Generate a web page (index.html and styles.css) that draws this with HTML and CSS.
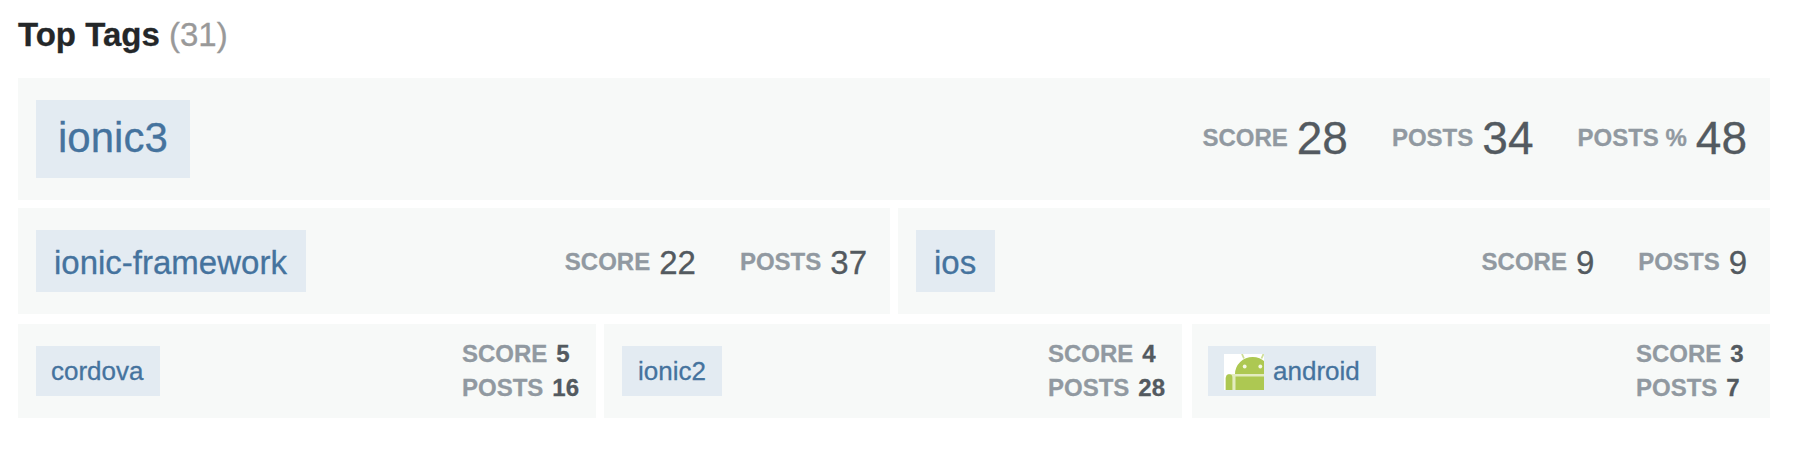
FILE: index.html
```html
<!DOCTYPE html>
<html lang="en">
<head>
<meta charset="utf-8">
<title>Top Tags</title>
<link rel="stylesheet" href="styles.css">
</head>
<body>
<section class="top-tags">
  <h2 class="heading">Top Tags <span class="count">(31)</span></h2>

  <div class="row row-large">
    <div class="card">
      <a class="tag">ionic3</a>
      <div class="stats">
        <div class="stat"><span class="label">SCORE</span><span class="number">28</span></div>
        <div class="stat"><span class="label">POSTS</span><span class="number">34</span></div>
        <div class="stat"><span class="label">POSTS %</span><span class="number">48</span></div>
      </div>
    </div>
  </div>

  <div class="row row-medium">
    <div class="card">
      <a class="tag">ionic-framework</a>
      <div class="stats">
        <div class="stat"><span class="label">SCORE</span><span class="number">22</span></div>
        <div class="stat"><span class="label">POSTS</span><span class="number">37</span></div>
      </div>
    </div>
    <div class="card">
      <a class="tag">ios</a>
      <div class="stats">
        <div class="stat"><span class="label">SCORE</span><span class="number">9</span></div>
        <div class="stat"><span class="label">POSTS</span><span class="number">9</span></div>
      </div>
    </div>
  </div>

  <div class="row row-small">
    <div class="card">
      <a class="tag tag-snug">cordova</a>
      <div class="stats">
        <div class="stat"><span class="label">SCORE</span><span class="number">5</span></div>
        <div class="stat"><span class="label">POSTS</span><span class="number">16</span></div>
      </div>
    </div>
    <div class="card">
      <a class="tag">ionic2</a>
      <div class="stats">
        <div class="stat"><span class="label">SCORE</span><span class="number">4</span></div>
        <div class="stat"><span class="label">POSTS</span><span class="number">28</span></div>
      </div>
    </div>
    <div class="card">
      <a class="tag">
        <svg class="tag-icon" width="40" height="36" viewBox="0 0 40 36">
          <rect width="40" height="36" fill="#fff"/>
          <rect x="1" y="20" width="39" height="16" fill="#e3ecc0"/>
          <path d="M0 19h5L1 24v12H0z" fill="#fff"/>
          <g fill="#adc852">
            <path d="M11 20a17.700 17 0 0 1 35.400 0z"/>
            <path d="M11.500 22.500H40V36H11.500z"/>
            <path d="M2 36V23.500a3.200 3.200 0 0 1 6.400 0V36z"/>
          </g>
          <path d="M18 0l2 4.500M39.500 0l-2 4.500" stroke="#cfdf98" stroke-width="1.800"/>
          <circle cx="20.700" cy="12.500" r="1.900" fill="#f4f8e4"/>
          <circle cx="36.300" cy="12.500" r="1.900" fill="#f4f8e4"/>
        </svg>android</a>
      <div class="stats">
        <div class="stat"><span class="label">SCORE</span><span class="number">3</span></div>
        <div class="stat"><span class="label">POSTS</span><span class="number">7</span></div>
      </div>
    </div>
  </div>
</section>
</body>
</html>
```
FILE: styles.css
```css
body {
  margin: 0;
  background: #fff;
  font-family: "Liberation Sans", Arial, Helvetica, sans-serif;
  -webkit-text-stroke: 0.3px;
}

.top-tags {
  width: 1752px;
  padding: 15px 0 0 18px;
}

.heading {
  margin: 0 0 23px;
  color: #242729;
  font-size: 33px;
  line-height: 40px;
  font-weight: bold;
}

.count {
  color: #999;
  font-weight: normal;
}

.row {
  display: flex;
  gap: 8px;
}

.card {
  flex: 1;
  display: flex;
  align-items: center;
  justify-content: space-between;
  box-sizing: border-box;
  padding: 0 23px 0 18px;
  background: #f7f9f8;
}

.tag {
  display: flex;
  align-items: center;
  box-sizing: border-box;
  background: #e3ebf2;
  color: #45739e;
}

.tag-icon {
  margin: 2px 9px 0 0;
}

.stats {
  display: flex;
  gap: 44px;
}

.stat {
  display: flex;
  align-items: center;
  gap: 9px;
}

.label {
  color: #9199a1;
  font-size: 24px;
  font-weight: bold;
}

.number {
  color: #535a60;
}

.row-large {
  height: 122px;
  margin-bottom: 8px;
}

.row-large .tag {
  height: 78px;
  padding: 0 22px 2px;
  font-size: 42px;
}

.row-large .label {
  padding-bottom: 2px;
}

.row-large .number {
  padding-bottom: 3px;
  font-size: 46px;
}

.row-medium {
  height: 106px;
  margin-bottom: 10px;
}

.row-medium .tag {
  height: 62px;
  padding: 3px 19px 0 18px;
  font-size: 33px;
}

.row-medium .label {
  padding-top: 1px;
}

.row-medium .number {
  padding-top: 3px;
  font-size: 33px;
}

.row-small {
  height: 94px;
}

.row-small .card {
  flex: none;
  width: 578px;
  padding-right: 0;
}

.row-small .card:last-child {
  margin-left: 2px;
  padding-left: 16px;
}

.row-small .tag {
  height: 50px;
  padding: 0 16px;
  font-size: 26px;
}

.row-small .tag-snug {
  padding: 0 16px 0 15px;
}

.row-small .stats {
  flex-direction: column;
  gap: 0;
  width: 134px;
}

.row-small .stat {
  height: 34px;
}

.row-small .number {
  font-size: 24px;
  font-weight: bold;
}
```
